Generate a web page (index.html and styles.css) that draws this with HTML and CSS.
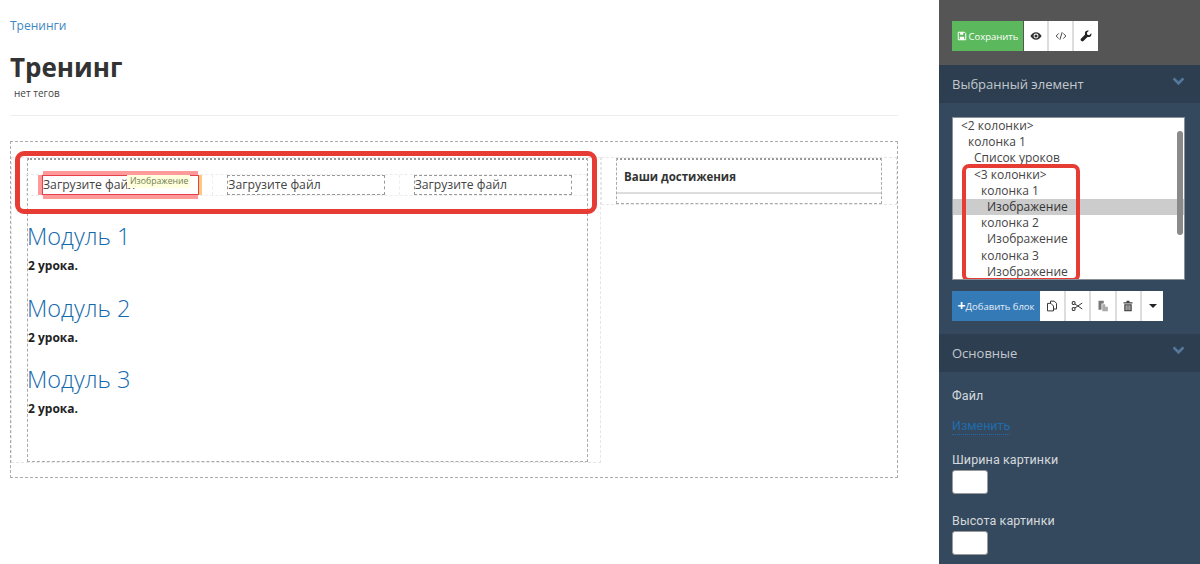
FILE: index.html
```html
<!DOCTYPE html>
<html lang="ru">
<head>
<meta charset="utf-8">
<title>Тренинг</title>
<link rel="stylesheet" href="styles.css">
</head>
<body>
<div class="page">
  <main class="main">
    <a class="crumb" href="#">Тренинги</a>
    <h1 class="title">Тренинг</h1>
    <div class="tags">нет тегов</div>
    <hr class="rule">
    <section class="builder">
      <div class="outer-row">
        <div class="col col-left">
          <div class="block-left">
            <div class="three-wrap">
              <div class="three">
                <div class="cell">
                  <div class="img-box selected">
                    <span class="pad pad-top"></span><span class="pad pad-bottom"></span><span class="pad pad-left"></span><span class="pad pad-right"></span>
                    <span class="img-text">Загрузите файл</span>
                    <span class="tip">Изображение</span>
                  </div>
                </div>
                <div class="cell"><div class="img-box"><span class="img-text">Загрузите файл</span></div></div>
                <div class="cell"><div class="img-box"><span class="img-text">Загрузите файл</span></div></div>
              </div>
            </div>
            <div class="module"><a class="module-name" href="#">Модуль 1</a><div class="module-info">2 урока.</div></div>
            <div class="module"><a class="module-name" href="#">Модуль 2</a><div class="module-info">2 урока.</div></div>
            <div class="module"><a class="module-name" href="#">Модуль 3</a><div class="module-info">2 урока.</div></div>
          </div>
        </div>
        <div class="col col-right">
          <div class="achieve">
            <div class="achieve-title">Ваши достижения</div>
          </div>
        </div>
      </div>
      <div class="mark mark-row"></div>
    </section>
  </main>

  <aside class="side">
    <div class="topbar">
      <button class="btn btn-save"><svg class="ic" viewBox="0 0 16 16"><path fill="none" stroke="#fff" stroke-width="1.6" d="M2 2h10l2 2v10H2z"/><path fill="#fff" d="M5 2h5v4H5zM4.5 9h7v5h-7z"/></svg>Сохранить</button>
      <button class="btn btn-w"><svg class="ic-l" viewBox="0 0 16 16"><path fill="#333" d="M8 3C4.5 3 1.8 5.6.5 8c1.3 2.4 4 5 7.500 5s6.200-2.600 7.500-5C14.200 5.600 11.500 3 8 3z"/><circle cx="8" cy="8" r="3.300" fill="#fff"/><circle cx="8" cy="8" r="2.100" fill="#333"/></svg></button>
      <button class="btn btn-w"><svg class="ic-l" viewBox="0 0 16 16"><path fill="none" stroke="#333" stroke-width="1.200" d="M5 4.500 1.500 8 5 11.500M11 4.500 14.500 8 11 11.500M9.500 3 6.500 13"/></svg></button>
      <button class="btn btn-w"><svg class="ic-l" viewBox="0 0 16 16"><path fill="#222" d="M15 4.200 12.300 6.900 9.800 6.200 9.100 3.700 11.800 1C9.700.3 7.300 1.200 6.700 3.300c-.3 1-.2 1.900.1 2.700L1.300 11.500c-.7.700-.7 1.800 0 2.500l.7.700c.7.700 1.800.7 2.500 0L10 9.200c.8.300 1.700.4 2.700.1 2.100-.6 3-3 2.300-5.100z"/></svg></button>
    </div>

    <header class="sec-head">
      <span>Выбранный элемент</span>
      <svg class="chev" viewBox="0 0 14 10"><path fill="none" stroke="#54779b" stroke-width="3" d="M1.500 1.500 7 7l5.500-5.500"/></svg>
    </header>
    <div class="sec-tree">
      <div class="tree">
        <div class="tree-row lv0">&lt;2 колонки&gt;</div>
        <div class="tree-row lv1">колонка 1</div>
        <div class="tree-row lv2">Список уроков</div>
        <div class="tree-row lv2">&lt;3 колонки&gt;</div>
        <div class="tree-row lv3">колонка 1</div>
        <div class="tree-row lv4 current">Изображение</div>
        <div class="tree-row lv3">колонка 2</div>
        <div class="tree-row lv4">Изображение</div>
        <div class="tree-row lv3">колонка 3</div>
        <div class="tree-row lv4">Изображение</div>
        <span class="thumb"></span>
        <span class="mark mark-tree"></span>
      </div>
      <div class="tools">
        <button class="btn btn-add"><b class="plus">+</b>Добавить блок</button>
        <button class="btn btn-t"><svg class="ic-l" viewBox="0 0 16 16"><path fill="none" stroke="#333" stroke-width="1.300" stroke-linejoin="round" d="M6 4.500V1.500h5l3 3v7.500h-4M2 4.500h4.500l3.500 3.500v6.500H2z"/></svg></button>
        <button class="btn btn-t"><svg class="ic-l" viewBox="0 0 16 16"><circle cx="3.500" cy="4" r="2" fill="none" stroke="#333" stroke-width="1.400"/><circle cx="3.500" cy="12" r="2" fill="none" stroke="#333" stroke-width="1.400"/><path fill="none" stroke="#333" stroke-width="1.300" d="M5 5.200 15 12M5 10.800 15 4"/></svg></button>
        <button class="btn btn-t"><svg class="ic-l" viewBox="0 0 16 16"><path fill="#777" d="M2 1h7v3.500H6V13H2z"/><path fill="#aaa" d="M7 5.500h4V9h3.500v6H7z"/></svg></button>
        <button class="btn btn-t"><svg class="ic-l" viewBox="0 0 16 16"><path fill="#444" d="M2 3h12v1.500H2zM6 1h4v2H6zM3 5.500h10V15H3z"/><path stroke="#fff" stroke-width="1" d="M5.500 7v6.500M8 7v6.500M10.500 7v6.500"/></svg></button>
        <button class="btn btn-c"><span class="caret"></span></button>
      </div>
    </div>

    <header class="sec-head sec-head-2">
      <span>Основные</span>
      <svg class="chev" viewBox="0 0 14 10"><path fill="none" stroke="#54779b" stroke-width="3" d="M1.500 1.500 7 7l5.500-5.500"/></svg>
    </header>
    <div class="sec-form">
      <div class="f-label f-file">Файл</div>
      <a class="f-link" href="#">Изменить</a>
      <label class="f-label f-w">Ширина картинки</label>
      <div class="f-input"></div>
      <label class="f-label f-h">Высота картинки</label>
      <div class="f-input"></div>
    </div>
  </aside>
</div>
</body>
</html>
```
FILE: styles.css
```css
* { box-sizing: border-box; }
html, body { margin: 0; height: 564px; overflow: hidden; }
body { font-family: "Open Sans", "Noto Sans", sans-serif; color: #333; background: #fff; }
.page { display: flex; height: 564px; }

.main { width: 939px; padding: 19px 0 0 10px; background: #fff; }
.crumb { display: block; font-size: 12px; line-height: 14px; color: #3f87c2; text-decoration: none; }
.title { margin: 18px 0 0; font-size: 26px; line-height: 32px; font-weight: 700; color: #333; }
.tags { margin: 3px 0 0 4px; font-size: 10px; line-height: 14px; color: #444; }
.rule { margin: 15px 0 0; width: 888px; border: 0; border-top: 1px solid #eee; }

.builder { position: relative; margin-top: 25px; width: 888px; height: 337px; border: 1px dashed #aaa; padding: 15px 0 0 0; }
.outer-row { display: flex; }
.col { border: 1px dashed #e6e6e6; height: 306px; }
.col-left { width: 590px; padding: 0 12px 0 15px; }
.col-right { width: 296px; padding: 0 14px 0 14px; height: 48px; }
.block-left { height: 304px; border: 1px dashed #aaa; border-top: 2px dotted #999; padding: 13px 0 0; }
.three-wrap { height: 24px; margin-bottom: 23px; }
.three { display: flex; height: 22px; margin: 1px 0 0 -2px; border: 1px dashed #ececec; }
.cell { flex: 0 0 33.33%; padding: 0 14px; border-right: 1px dashed #ececec; }
.cell:first-child { padding-left: 15px; padding-right: 13px; }
.cell:last-child { border-right: 0; }
.img-box { position: relative; height: 20px; border: 1px dashed #999; white-space: nowrap; overflow: visible; }
.img-text { display: block; font-size: 12.200px; line-height: 18px; color: #444; }
.selected { border: 1px solid #e8404a; }
.pad { position: absolute; }
.pad-top { left: 0; right: 0; top: -5px; height: 4px; background: #ff9a9a; }
.pad-bottom { left: 0; right: 0; bottom: -5px; height: 4px; background: #ff9a9a; }
.pad-left { left: -5px; top: -1px; bottom: -1px; width: 4px; background: #ff9a9a; }
.pad-right { right: -4px; top: -1px; bottom: -1px; width: 3px; background: #ffc97e; }
.tip { position: absolute; top: -1px; left: 84px; width: 63px; height: 13px; padding-left: 3px; font-size: 8.700px; line-height: 12px; color: #6f7d50; background: #ffffdd; }

.module { height: 71.700px; }
.module-name { display: block; font-size: 23.500px; line-height: 31px; font-weight: 300; color: #1469ad; text-decoration: none; margin-left: -1px; }
.module-info { margin-top: 6px; font-size: 12px; line-height: 16px; font-weight: 700; color: #222; }

.achieve { height: 46px; border: 1px dashed #aaa; border-top: 2px dotted #999; }
.achieve-title { height: 34px; padding: 9px 7px 0; border-bottom: 2px solid #ddd; font-size: 11.500px; line-height: 16px; font-weight: 700; color: #333; }

.mark { position: absolute; border-style: solid; border-color: #e63c33; pointer-events: none; }
.mark-row { left: 4px; top: 9px; width: 582px; height: 63px; border-width: 5px; border-radius: 9px; }
.mark-tree { left: 9px; top: 46px; width: 118px; height: 118px; border-width: 4px; border-radius: 7px; }

.side { width: 261px; flex: none; background: #34495e; }
.topbar { display: flex; height: 65px; padding: 21px 0 0 13px; background: #555; }
.btn { display: flex; align-items: center; justify-content: center; margin: 0; padding: 0; border: 0; font-family: inherit; color: #333; }
.btn-save { width: 71px; height: 30px; font-size: 9.500px; color: #fff; background: #5cb85c; }
.btn-w { width: 25px; height: 30px; background: #fff; border-right: 2px solid #ddd; }
.btn-w:nth-child(2) { margin-left: 1px; }
.btn-w:last-child { border-right: 0; width: 24px; }
.ic { width: 10px; height: 10px; margin-right: 2px; }
.ic-l { width: 12px; height: 12px; }

.sec-head { display: flex; justify-content: space-between; align-items: center; height: 38px; padding: 0 15px 0 13px; background: #2c3e50; font-size: 13px; color: #c3c8cd; }
.chev { width: 13px; height: 9px; margin-top: -6px; }
.sec-tree { height: 231px; padding: 14px 0 0 13px; }
.tree { position: relative; width: 233px; height: 163px; background: #fff; border: 1px solid #8a9097; overflow: hidden; }
.tree-row { height: 16.200px; font-size: 12px; line-height: 16px; color: #444; white-space: nowrap; }
.lv0 { padding-left: 8px; }
.lv1 { padding-left: 15px; }
.lv2 { padding-left: 21px; }
.lv3 { padding-left: 28px; }
.lv4 { padding-left: 34px; }
.current { background: #ccc; color: #333; }
.thumb { position: absolute; right: 1px; top: 13px; width: 6px; height: 104px; border-radius: 3px; background: #8a8a8a; }
.tools { display: flex; margin-top: 11px; }
.btn-add { width: 88px; height: 30px; font-size: 9.500px; color: #e4edf5; background: #337ab7; }
.plus { font-size: 14px; line-height: 14px; color: #fff; }
.btn-t { width: 25.500px; height: 30px; background: #fff; border-right: 2px solid #ddd; }
.btn-c { width: 21px; height: 30px; background: #fff; }
.caret { width: 0; height: 0; border: 4px solid transparent; border-top-color: #222; border-bottom: 0; }

.sec-form { padding: 16px 13px 0; font-family: Roboto, "Open Sans", sans-serif; }
.f-label { display: block; font-size: 12.500px; line-height: 16px; color: #d5d9dd; letter-spacing: .1px; }
.f-link { display: inline-block; margin-top: 13px; font-size: 12.500px; line-height: 17px; color: #1f6cad; text-decoration: none; border-bottom: 1px dotted #1f6cad; }
.f-w { margin-top: 17px; }
.f-h { margin-top: 19px; }
.f-input { width: 36px; height: 24px; margin-top: 2px; background: #fff; border: 1px solid #999; border-radius: 3px; }
```
